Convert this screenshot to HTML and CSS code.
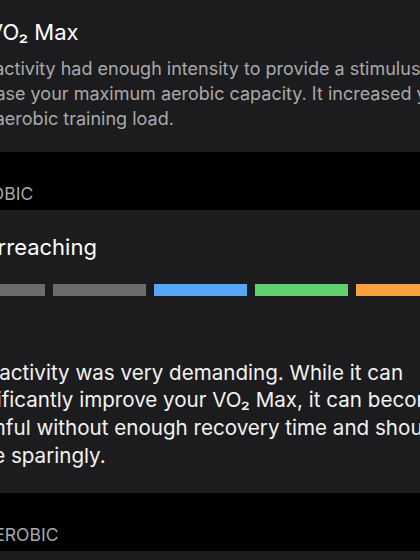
FILE: index.html
```html
<!DOCTYPE html>
<html lang="en">

<head>
    <meta charset="utf-8">
    <meta name="viewport" content="width=device-width, initial-scale=1.0">
    <title>Training Effect</title>
    <link rel="stylesheet" href="styles.css">
</head>

<body>

    <main class="screen">
        <section class="card card-top">
            <h2 class="card-title benefit">
                <svg class="benefit-icon" viewBox="0 0 24 24" width="22" height="22">
                    <circle cx="12" cy="12" r="10" fill="#5fcf6f" />
                    <path d="M7 13l3 3 7-8" fill="none" stroke="#1c1c1e" stroke-width="2.4" />
                </svg>
                <span>VO₂ Max</span>
            </h2>
            <p class="card-text dim">
                <span>This activity had enough intensity to provide a stimulus to</span>
                <span>increase your maximum aerobic capacity. It increased your</span>
                <span>high aerobic training load.</span>
            </p>
        </section>

        <h3 class="group-label">Aerobic</h3>
        <section class="card">
            <h2 class="card-title">Overreaching</h2>
            <div class="scale">
                <div class="bar gray"></div>
                <div class="bar gray"></div>
                <div class="bar blue"></div>
                <div class="bar green"></div>
                <div class="bar orange"></div>
                <div class="bar red"></div>
            </div>
            <p class="card-text large">
                <span>The activity was very demanding. While it can</span>
                <span>significantly improve your VO₂ Max, it can become</span>
                <span>harmful without enough recovery time and should be</span>
                <span>done sparingly.</span>
            </p>
        </section>

        <h3 class="group-label">Anaerobic</h3>
        <section class="card card-bottom"></section>
    </main>

</body></html>
```

FILE: styles.css
```css
body {
    margin: 0;
    background-color: #000;
    overflow: hidden;
    font-family: Inter, "Noto Sans", sans-serif;
    color: #fff;
}

.screen {
    margin-left: -40px;
    width: 600px;
}

.card {
    background-color: #1c1c1e;
    padding: 23px 0 24px 0;
}

.card-top {
    padding-top: 18px;
    padding-bottom: 21px;
}

.card-bottom {
    height: 40px;
    padding: 0;
}

.card-title {
    margin: 0 0 0 -4px;
    font-size: 22px;
    line-height: 28px;
    font-weight: 400;
    white-space: nowrap;
}

.benefit {
    display: flex;
    align-items: center;
    gap: 10px;
}

.benefit-icon {
    flex: none;
}

.card-text {
    margin: 10px 0 0 -7px;
    font-size: 18px;
    line-height: 25px;
    color: #f2f2f2;
    white-space: nowrap;
}

.card-text span {
    display: block;
}

.dim {
    color: #a9a9ab;
}

.large {
    margin-left: -4px;
    font-size: 20.6px;
    line-height: 27.7px;
}

.scale {
    display: flex;
    gap: 8px;
    margin: 23px 0 62.5px -8px;
}

.scale + .card-text {
    margin-top: 0;
}

.bar {
    flex: none;
    width: 93px;
    height: 12px;
}

.gray {
    background-color: #6c6c6c;
}

.blue {
    background-color: #55a6f6;
}

.green {
    background-color: #5fcf6f;
}

.orange {
    background-color: #f7a03e;
}

.red {
    background-color: #e5484d;
}

.group-label {
    margin: 0 0 0 -3px;
    padding: 32px 0 6px 0;
    font-size: 17.5px;
    line-height: 20px;
    font-weight: 400;
    text-transform: uppercase;
    color: #a9a9ab;
}
```
